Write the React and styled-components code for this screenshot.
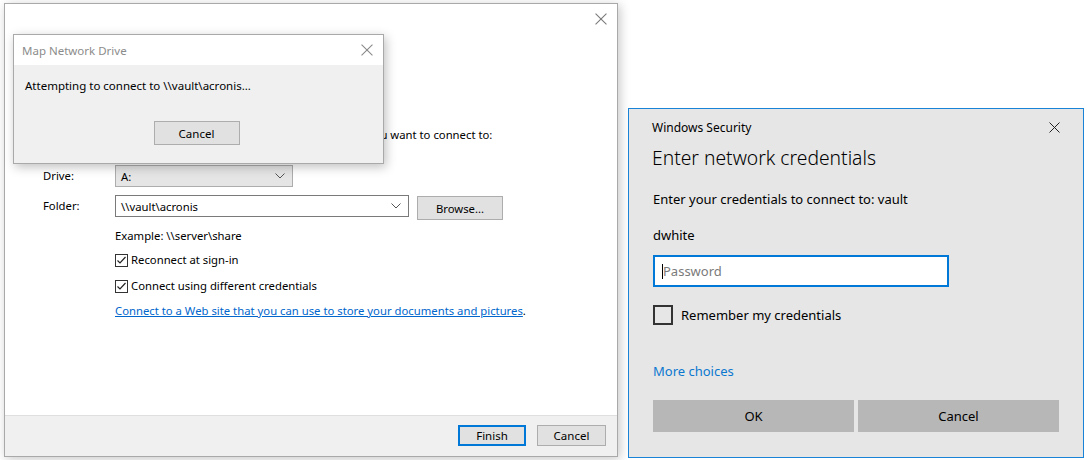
import styled, { createGlobalStyle } from "styled-components"

const GlobalStyle = createGlobalStyle`
    html, body {
        margin: 0;
        padding: 0;
        background: #ffffff;
    }
    body {
        font-family: "Segoe UI", "Noto Sans", "Open Sans", sans-serif;
        color: #000;
    }
`

const CloseIcon = ({ size = 11, color = "#000", weight = 1 }) => (
    <svg width={size} height={size} viewBox="0 0 11 11">
        <path d="M0.5 0.5 L10.5 10.5 M10.5 0.5 L0.5 10.5" stroke={color} strokeWidth={weight} fill="none" />
    </svg>
)

const Chevron = () => (
    <svg width="10" height="6" viewBox="0 0 10 6">
        <path d="M0.5 0.5 L5 5 L9.5 0.5" stroke="#555" strokeWidth="1" fill="none" />
    </svg>
)

const Check = ({ label }) => (
    <CheckRow>
        <SmallBox>
            <svg width="11" height="11" viewBox="0 0 11 11">
                <path d="M1.5 5.5 L4 8 L9.5 2" stroke="#222" strokeWidth="1.2" fill="none" />
            </svg>
        </SmallBox>
        {label}
    </CheckRow>
)

const App = () => {
    return (
        <Desktop>
            <GlobalStyle />

            <MainWindow>
                <MainClose>
                    <CloseIcon size={12} color="#7a7a7a" />
                </MainClose>
                <MainBody>
                    <Heading>What network folder would you like to map?</Heading>
                    <Instruction>
                        Specify the drive letter for the connection and the folder that you want to connect to:
                    </Instruction>

                    <FormRow $top={22}>
                        <Label>Drive:</Label>
                        <DriveSelect>
                            A:
                            <Chevron />
                        </DriveSelect>
                    </FormRow>

                    <FormRow $top={8}>
                        <Label>Folder:</Label>
                        <FolderCombo>
                            \\vault\acronis
                            <Chevron />
                        </FolderCombo>
                        <BrowseButton>Browse...</BrowseButton>
                    </FormRow>

                    <Indented $top={8}>Example: \\server\share</Indented>
                    <Indented $top={8}>
                        <Check label="Reconnect at sign-in" />
                    </Indented>
                    <Indented $top={10}>
                        <Check label="Connect using different credentials" />
                    </Indented>
                    <Indented $top={9}>
                        <Link>Connect to a Web site that you can use to store your documents and pictures</Link>.
                    </Indented>
                </MainBody>
                <Footer>
                    <WizardButton $primary>Finish</WizardButton>
                    <WizardButton>Cancel</WizardButton>
                </Footer>
            </MainWindow>

            <ProgressWindow>
                <ProgressTitle>
                    <span>Map Network Drive</span>
                    <CloseIcon size={12} color="#8a8a8a" />
                </ProgressTitle>
                <ProgressBody>
                    <Message>Attempting to connect to \\vault\acronis...</Message>
                    <ProgressActions>
                        <ProgressButton>Cancel</ProgressButton>
                    </ProgressActions>
                </ProgressBody>
            </ProgressWindow>

            <SecurityWindow>
                <SecurityTitle>
                    <span>Windows Security</span>
                    <CloseIcon size={11} color="#222" />
                </SecurityTitle>
                <SecurityHeading>Enter network credentials</SecurityHeading>
                <SecurityText $top={18}>Enter your credentials to connect to: vault</SecurityText>
                <SecurityText $top={18}>dwhite</SecurityText>
                <PasswordBox>
                    <Caret />
                    <Placeholder>Password</Placeholder>
                </PasswordBox>
                <RememberRow>
                    <BigBox />
                    Remember my credentials
                </RememberRow>
                <MoreChoices>More choices</MoreChoices>
                <SecurityActions>
                    <FlatButton>OK</FlatButton>
                    <FlatButton>Cancel</FlatButton>
                </SecurityActions>
            </SecurityWindow>
        </Desktop>
    )
}

export default App

const Desktop = styled.div`
    position: relative;
    width: 1087px;
    height: 460px;
    overflow: hidden;
    background: #ffffff;
`

const MainWindow = styled.div`
    position: absolute;
    left: 4px;
    top: 3px;
    width: 612px;
    height: 452px;
    border: 1px solid #a9a9a9;
    background: #ffffff;
    display: flex;
    flex-direction: column;
    box-shadow: 2px 2px 10px rgba(0, 0, 0, 0.22);
`

const MainClose = styled.div`
    position: absolute;
    right: 10px;
    top: 9px;
    display: flex;
`

const MainBody = styled.div`
    flex: 1;
    padding: 72px 0 0 38px;
    font-size: 11.3px;
`

const Heading = styled.div`
    font-size: 15px;
    line-height: 20px;
    color: #003399;
`

const Instruction = styled.div`
    margin-top: 31px;
    line-height: 16px;
`

const FormRow = styled.div`
    display: flex;
    align-items: flex-start;
    margin-top: ${p => p.$top}px;
`

const Label = styled.div`
    width: 72px;
    line-height: 22px;
`

const DriveSelect = styled.div`
    box-sizing: border-box;
    width: 178px;
    height: 22px;
    border: 1px solid #adadad;
    background: #e5e5e5;
    display: flex;
    align-items: center;
    justify-content: space-between;
    padding: 0 7px 0 5px;
`

const FolderCombo = styled.div`
    box-sizing: border-box;
    width: 294px;
    height: 22px;
    border: 1px solid #7a7a7a;
    background: #ffffff;
    display: flex;
    align-items: center;
    justify-content: space-between;
    padding: 0 7px 0 5px;
`

const BrowseButton = styled.div`
    box-sizing: border-box;
    margin: 1px 0 0 8px;
    width: 86px;
    height: 24px;
    border: 1px solid #adadad;
    background: #e1e1e1;
    display: flex;
    align-items: center;
    justify-content: center;
`

const Indented = styled.div`
    margin: ${p => p.$top}px 0 0 72px;
    line-height: 16px;
`

const CheckRow = styled.div`
    display: flex;
    align-items: center;
    gap: 3px;
`

const SmallBox = styled.div`
    box-sizing: border-box;
    width: 13px;
    height: 13px;
    border: 1px solid #333;
    background: #fff;
    display: flex;
    align-items: center;
    justify-content: center;
`

const Link = styled.span`
    color: #0066cc;
    text-decoration: underline;
`

const Footer = styled.div`
    height: 41px;
    border-top: 1px solid #dfdfdf;
    background: #f0f0f0;
    display: flex;
    justify-content: flex-end;
    align-items: flex-start;
    gap: 11px;
    padding: 9px 11px 0 0;
    box-sizing: border-box;
    font-size: 11.5px;
`

const WizardButton = styled.div`
    box-sizing: border-box;
    width: ${p => (p.$primary ? 68 : 69)}px;
    height: 21px;
    border: ${p => (p.$primary ? "2px solid #0078d7" : "1px solid #adadad")};
    background: #e1e1e1;
    display: flex;
    align-items: center;
    justify-content: center;
`

const ProgressWindow = styled.div`
    position: absolute;
    left: 13px;
    top: 34px;
    width: 369px;
    height: 128px;
    border: 1px solid #a9a9a9;
    background: #f0f0f0;
    display: flex;
    flex-direction: column;
    box-shadow: 2px 3px 10px rgba(0, 0, 0, 0.25);
    font-size: 11.5px;
`

const ProgressTitle = styled.div`
    height: 30px;
    background: #ffffff;
    display: flex;
    align-items: center;
    justify-content: space-between;
    padding: 0 10px 0 8px;
    color: #8c8c8c;
`

const ProgressBody = styled.div`
    flex: 1;
    display: flex;
    flex-direction: column;
    padding: 13px 0 0 11px;
`

const Message = styled.div`
    line-height: 16px;
`

const ProgressActions = styled.div`
    display: flex;
    justify-content: center;
    margin-top: 27px;
    padding-right: 15px;
`

const ProgressButton = styled.div`
    box-sizing: border-box;
    width: 86px;
    height: 24px;
    border: 1px solid #adadad;
    background: #e1e1e1;
    display: flex;
    align-items: center;
    justify-content: center;
`

const SecurityWindow = styled.div`
    position: absolute;
    left: 628px;
    top: 108px;
    width: 456px;
    height: 350px;
    box-sizing: border-box;
    border: 1px solid #1883d7;
    background: #e6e6e6;
    padding: 0 23px;
    font-size: 13px;
    display: flex;
    flex-direction: column;
`

const SecurityTitle = styled.div`
    display: flex;
    justify-content: space-between;
    align-items: center;
    margin-top: 9px;
    height: 18px;
    font-size: 12px;
`

const SecurityHeading = styled.div`
    margin-top: 8px;
    font-size: 19.3px;
    line-height: 28px;
    font-weight: 300;
`

const SecurityText = styled.div`
    margin: ${p => p.$top}px 0 0 1px;
    line-height: 18px;
`

const PasswordBox = styled.div`
    box-sizing: border-box;
    margin: 11px 0 0 1px;
    width: 296px;
    height: 32px;
    border: 2px solid #0078d7;
    background: #ffffff;
    display: flex;
    align-items: center;
    padding-left: 7px;
`

const Caret = styled.span`
    width: 1px;
    height: 15px;
    background: #000;
`

const Placeholder = styled.span`
    color: #7a7a7a;
`

const RememberRow = styled.div`
    margin: 18px 0 0 1px;
    display: flex;
    align-items: center;
    gap: 8px;
`

const BigBox = styled.div`
    box-sizing: border-box;
    width: 20px;
    height: 20px;
    border: 2px solid #333;
`

const MoreChoices = styled.div`
    margin: 37px 0 0 1px;
    line-height: 18px;
    color: #0b78d0;
`

const SecurityActions = styled.div`
    margin: 20px 0 0 1px;
    display: grid;
    grid-template-columns: 201px 201px;
    gap: 4px;
`

const FlatButton = styled.div`
    height: 32px;
    background: #b7b7b7;
    display: flex;
    align-items: center;
    justify-content: center;
`
